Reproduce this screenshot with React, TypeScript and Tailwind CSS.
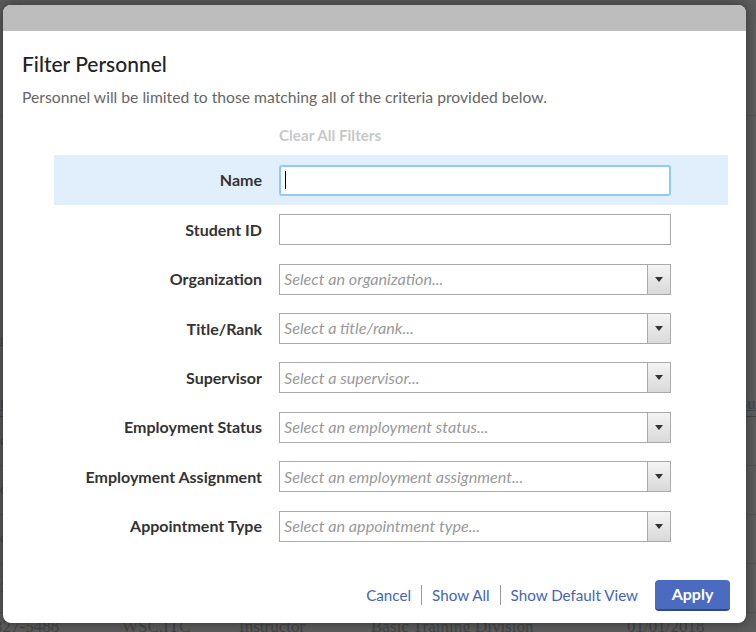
import React from 'react';

const selects = [
  { label: 'Organization', placeholder: 'Select an organization...' },
  { label: 'Title/Rank', placeholder: 'Select a title/rank...' },
  { label: 'Supervisor', placeholder: 'Select a supervisor...' },
  { label: 'Employment Status', placeholder: 'Select an employment status...' },
  { label: 'Employment Assignment', placeholder: 'Select an employment assignment...' },
  { label: 'Appointment Type', placeholder: 'Select an appointment type...' },
];

const bgRows = [
  ['327-5488', 'WSC.ITC', 'Instructor', 'Basic Training Division', '01/01/2018'],
];

const Background = () => (
  <div className="h-[632px] overflow-hidden bg-white text-black" style={{ fontFamily: '"Liberation Serif", serif' }}>
    <div className="h-[116px] border-b border-gray-400" />
    <div className="mt-[212px] text-[15px] text-[#1a3c8a] underline">ri</div>
    <div className="mt-[40px] flex h-[26px] items-end justify-between border-b border-black text-[16px] font-bold text-[#1a3c8a]">
      <span className="underline">t</span>
      <span className="underline">Su</span>
    </div>
    {[0, 1, 2, 3].map((i) => (
      <div key={i} className="flex h-[49px] items-center border-b border-gray-400 text-[15px]">
        <span>{i === 3 ? '1' : 'c'}</span>
      </div>
    ))}
    {bgRows.map((r) => (
      <div key={r[0]} className="flex h-[24px] items-start pt-[5px] text-[17px] leading-[18px]">
        <span className="-ml-[6px] w-[128px]">{r[0]}</span>
        <span className="w-[117px]">{r[1]}</span>
        <span className="w-[132px]">{r[2]}</span>
        <span className="w-[256px]">{r[3]}</span>
        <span>{r[4]}</span>
      </div>
    ))}
  </div>
);

const Label = ({ children }: { children: React.ReactNode }) => (
  <label className="w-[225px] shrink-0 pr-[17px] text-right text-[16px] font-bold text-[#333]">{children}</label>
);

const Select = ({ placeholder }: { placeholder: string }) => (
  <div className="flex h-[31px] w-[392px] border border-[#aaa] bg-white">
    <div className="flex flex-1 items-center pl-[4px] text-[16.2px] italic text-[#999]">{placeholder}</div>
    <div className="flex w-[23px] items-center justify-center border-l border-[#aaa] bg-gradient-to-b from-[#f4f4f4] to-[#d9d9d9]">
      <svg width="8" height="5" viewBox="0 0 8 5">
        <path d="M0 0h8L4 5z" fill="#333" />
      </svg>
    </div>
  </div>
);

export default function App() {
  return (
    <div className="relative h-[632px] w-[756px] overflow-hidden">
      <Background />
      <div className="absolute inset-0 bg-[#4a4a4a]/90" />
      <div
        className="absolute left-[3px] top-[5px] h-[618px] w-[743px] overflow-hidden rounded-[8px] bg-white shadow-[0_0_12px_rgba(0,0,0,0.45)]"
        style={{ fontFamily: 'Lato, "Open Sans", sans-serif' }}
      >
        <div className="h-[26px] bg-[#bdbdbd]" />
        <div className="px-[19px] pt-[21px]">
          <h1 className="text-[21px] leading-[24px] font-medium text-[#222]">Filter Personnel</h1>
          <p className="mt-[11px] text-[15.7px] leading-[20px] text-[#666]">
            Personnel will be limited to those matching all of the criteria provided below.
          </p>
        </div>
        <div className="mt-[18px] pl-[276px] text-[15.2px] leading-[20px] font-bold text-[#c8c8c8]">Clear All Filters</div>

        <div className="mt-[10px] ml-[51px] w-[674px]">
          <div className="flex h-[50px] items-center bg-[#e1effd]">
            <Label>Name</Label>
            <div className="flex h-[31px] w-[392px] items-center rounded-[3px] border-2 border-[#8fcbf6] bg-white pl-[4px]">
              <span className="h-[18px] w-px bg-black" />
            </div>
          </div>
          <div className="flex h-[49.5px] items-center">
            <Label>Student ID</Label>
            <div className="h-[31px] w-[392px] border border-[#aaa] bg-white" />
          </div>
          {selects.map((s) => (
            <div key={s.label} className="flex h-[49.4px] items-center">
              <Label>{s.label}</Label>
              <Select placeholder={s.placeholder} />
            </div>
          ))}
        </div>

        <div className="mt-[29px] flex items-center justify-end pr-[16px] text-[15.2px] text-[#4466b3]">
          <a className="cursor-pointer">Cancel</a>
          <span className="mx-[10px] h-[20px] w-px bg-[#999]" />
          <a className="cursor-pointer">Show All</a>
          <span className="mx-[10px] h-[20px] w-px bg-[#999]" />
          <a className="cursor-pointer">Show Default View</a>
          <button className="ml-[17px] h-[31px] w-[75px] rounded-[4px] border-b-2 border-[#2f4887] bg-[#4a6bbf] text-[16px] font-bold text-white">
            Apply
          </button>
        </div>
      </div>
    </div>
  );
}
